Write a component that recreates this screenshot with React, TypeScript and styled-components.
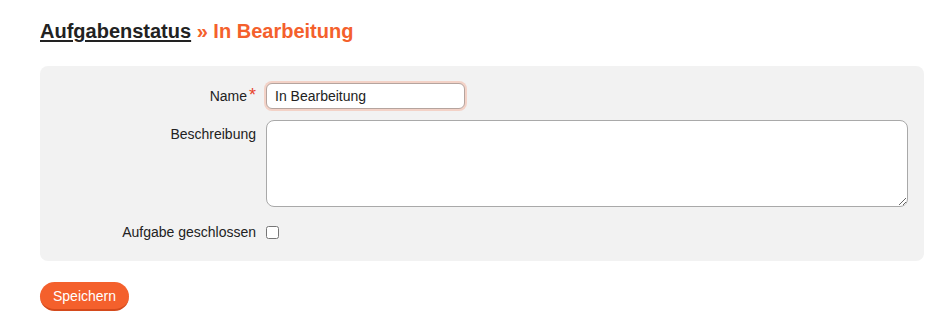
import React from 'react';
import styled, { createGlobalStyle } from 'styled-components';

const orange = '#f4602c';
const panelGrey = '#f2f2f2';
const textDark = '#222222';

const GlobalStyle = createGlobalStyle`
  html, body {
    margin: 0;
    padding: 0;
    background: #ffffff;
    font-family: "Liberation Sans", Arial, sans-serif;
    color: ${textDark};
  }
  * {
    box-sizing: border-box;
  }
`;

const Page = styled.div`
  padding: 18px 28px 0 40px;
`;

const Title = styled.h1`
  margin: 0 0 22px;
  font-size: 20px;
  line-height: 26px;
  font-weight: 700;
`;

const TitleLink = styled.a`
  color: ${textDark};
  text-decoration: underline;
  text-underline-offset: 2px;
`;

const TitleCurrent = styled.span`
  color: ${orange};
`;

const Panel = styled.div`
  background: ${panelGrey};
  border-radius: 8px;
  padding: 17px 16px 15px 10px;
  display: grid;
  grid-template-columns: 206px 1fr;
  column-gap: 10px;
  row-gap: 11px;
`;

const Label = styled.label<{ $top?: boolean }>`
  font-size: 14px;
  text-align: right;
  align-self: ${p => (p.$top ? 'start' : 'center')};
  padding-top: ${p => (p.$top ? '6px' : '0')};
`;

const Required = styled.span`
  color: #e8432c;
  font-size: 18px;
  line-height: 14px;
  margin-left: 2px;
`;

const Cell = styled.div<{ $height?: number }>`
  display: flex;
  align-items: center;
  min-height: ${p => (p.$height ? `${p.$height}px` : 'auto')};
`;

const TextInput = styled.input`
  width: 199px;
  height: 26px;
  padding: 0 8px;
  font-family: "Liberation Sans", Arial, sans-serif;
  font-size: 14px;
  color: ${textDark};
  border: 1px solid #b5a49e;
  border-radius: 6px;
  background: #fff;
  box-shadow: 0 0 0 2px rgba(244, 96, 44, 0.22);
  outline: none;
`;

const TextArea = styled.textarea`
  display: block;
  width: 100%;
  height: 87px;
  margin: 0;
  border: 1px solid #a9a9a9;
  border-radius: 8px;
  background: #fff;
  font-family: "Liberation Sans", Arial, sans-serif;
  font-size: 14px;
  resize: vertical;
  outline: none;
`;

const Checkbox = styled.input`
  width: 13px;
  height: 13px;
  margin: 0;
`;

const SaveButton = styled.button`
  margin-top: 21px;
  height: 29px;
  padding: 0 13px;
  border: none;
  border-bottom: 2px solid #d44a1c;
  border-radius: 15px;
  background: ${orange};
  color: #fff;
  font-family: "Liberation Sans", Arial, sans-serif;
  font-size: 14px;
  cursor: pointer;
`;

const App = () => {
  return (
    <>
      <GlobalStyle />
      <Page>
        <Title>
          <TitleLink href="#">Aufgabenstatus</TitleLink>{' '}
          <TitleCurrent>» In Bearbeitung</TitleCurrent>
        </Title>
        <Panel>
          <Label htmlFor="name">
            Name<Required>*</Required>
          </Label>
          <Cell>
            <TextInput id="name" defaultValue="In Bearbeitung" />
          </Cell>
          <Label htmlFor="desc" $top>
            Beschreibung
          </Label>
          <Cell>
            <TextArea id="desc" />
          </Cell>
          <Label htmlFor="closed">Aufgabe geschlossen</Label>
          <Cell $height={28}>
            <Checkbox id="closed" type="checkbox" />
          </Cell>
        </Panel>
        <SaveButton>Speichern</SaveButton>
      </Page>
    </>
  );
};

export default App;
